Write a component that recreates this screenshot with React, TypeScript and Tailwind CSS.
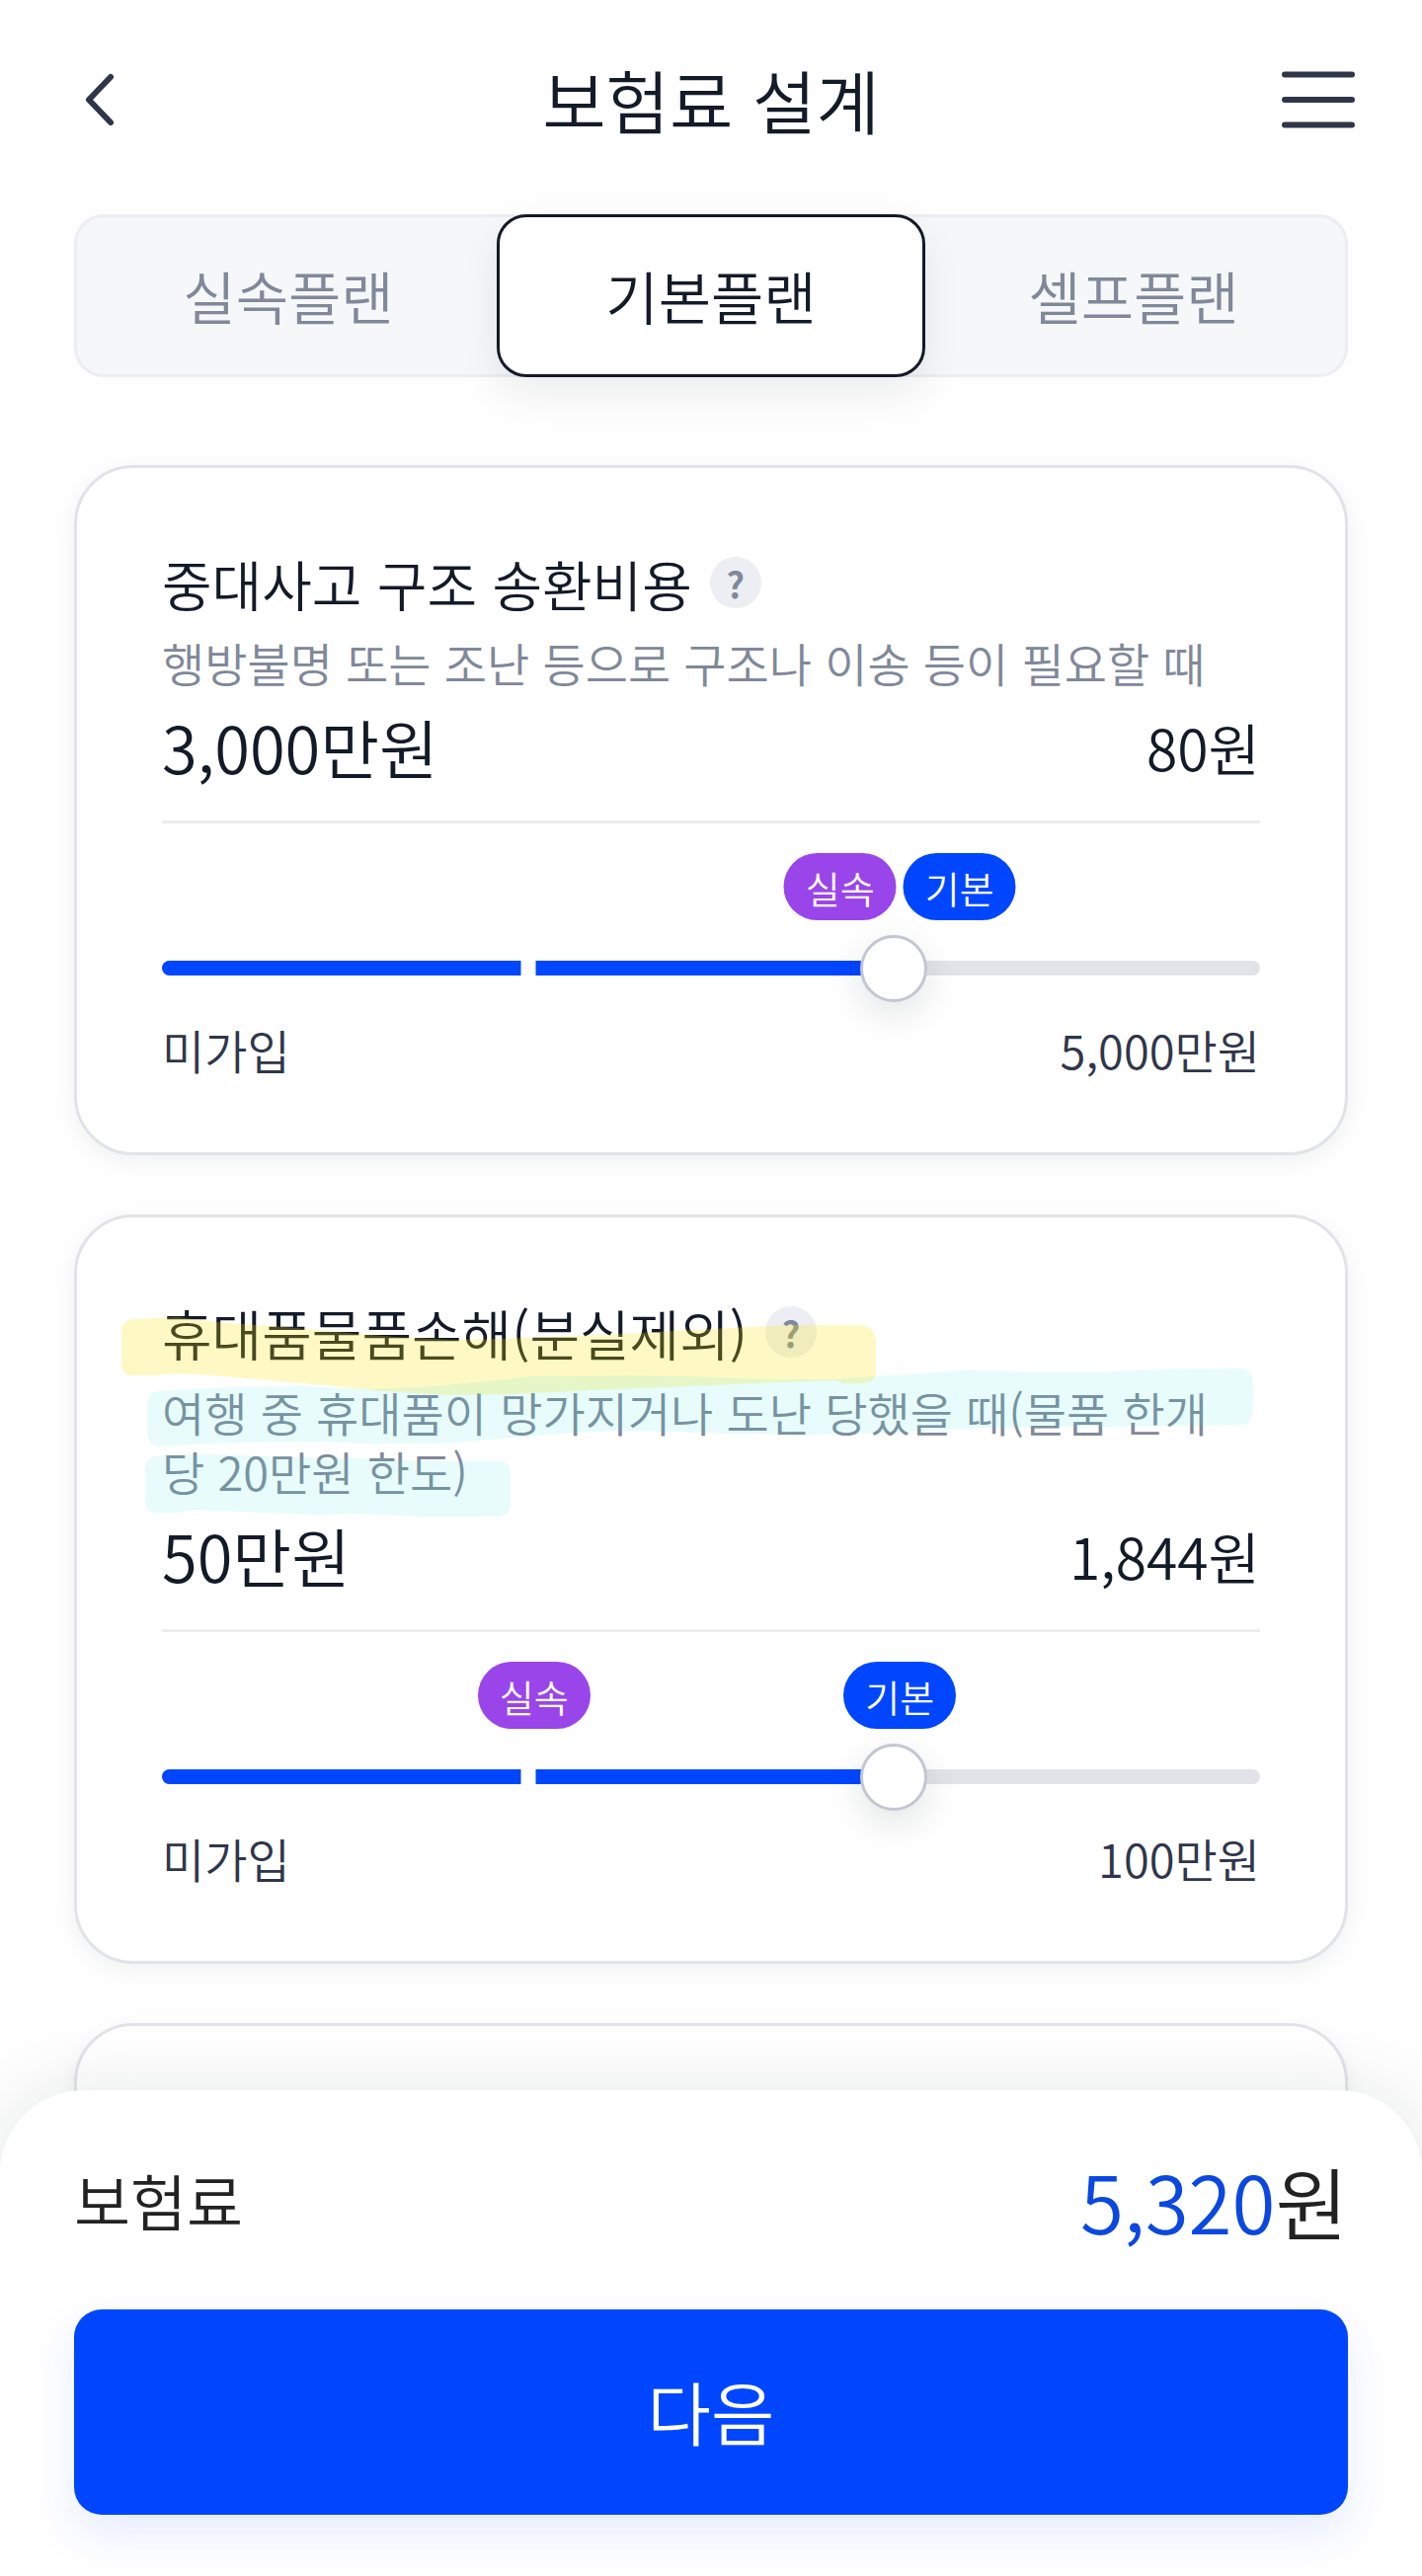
import { useState } from "react";
import clsx from "clsx";

const PLANS = ["실속플랜", "기본플랜", "셀프플랜"];

interface Badge {
  label: string;
  tone: "purple" | "blue";
}

interface Coverage {
  id: string;
  title: string;
  description: string;
  amount: string;
  price: string;
  max: string;
  // badges grouped by the slider step they sit on
  badges: { step: number; items: Badge[] }[];
  highlighted?: boolean;
}

const SAVER: Badge = { label: "실속", tone: "purple" };
const BASIC: Badge = { label: "기본", tone: "blue" };

const COVERAGES: Coverage[] = [
  {
    id: "rescue",
    title: "중대사고 구조 송환비용",
    description: "행방불명 또는 조난 등으로 구조나 이송 등이 필요할 때",
    amount: "3,000만원",
    price: "80원",
    max: "5,000만원",
    badges: [{ step: 2, items: [SAVER, BASIC] }],
  },
  {
    id: "belongings",
    title: "휴대품물품손해(분실제외)",
    description: "여행 중 휴대품이 망가지거나 도난 당했을 때(물품 한개당 20만원 한도)",
    amount: "50만원",
    price: "1,844원",
    max: "100만원",
    badges: [
      { step: 1, items: [SAVER] },
      { step: 2, items: [BASIC] },
    ],
    highlighted: true,
  },
];

const STEPS = 3;

const Header = () => (
  <header className="flex h-[217px] items-center justify-between px-[68px] pb-4">
    <button type="button" aria-label="뒤로" className="flex w-[74px] justify-start pl-4">
      <svg width="36" height="56" viewBox="0 0 36 56" fill="none" stroke="#30364a" strokeWidth="6" strokeLinecap="round" strokeLinejoin="round">
        <path d="M28 5 6 28l22 23" />
      </svg>
    </button>
    <h1 className="text-[70px] leading-[88px] text-[#131a28]">보험료 설계</h1>
    <button type="button" aria-label="메뉴" className="flex w-[74px] justify-end">
      <svg width="74" height="58" viewBox="0 0 74 58" fill="none" stroke="#30364a" strokeWidth="6" strokeLinecap="round">
        <path d="M3 3.5h68M3 29h68M3 54.5h68" />
      </svg>
    </button>
  </header>
);

const PlanTabs = () => {
  const [active, setActive] = useState(1);

  return (
    <nav className="mx-[75px] grid h-[165px] grid-cols-3 rounded-[30px] border-[3px] border-[#eceef2] bg-[#f5f7f9]">
      {PLANS.map((plan, i) => (
        <button
          key={plan}
          type="button"
          aria-pressed={i === active}
          onClick={() => setActive(i)}
          className={clsx(
            "-m-[3px] rounded-[30px] text-[58px]",
            i === active
              ? "border-[3px] border-[#131a28] bg-white text-[#131a28] shadow-[0_16px_40px_rgba(19,26,40,0.08)]"
              : "text-[#80889a]"
          )}
        >
          {plan}
        </button>
      ))}
    </nav>
  );
};

// Marker-pen strokes over the title and the description
const Highlights = () => (
  <svg
    aria-hidden="true"
    className="pointer-events-none absolute top-0 left-0 h-[320px] w-[1200px]"
    viewBox="78 1234 1200 320"
  >
    <path
      fill="rgb(250 232 10)"
      fillOpacity="0.24"
      d="M123 1350Q123 1337 138 1337L180 1335 220 1340 300 1346 340 1350 400 1355 460 1358 510 1357 610 1353 720 1347 800 1343 870 1343Q887 1344 887 1360V1390Q887 1402 872 1402H856Q850 1402 848 1399L760 1402 700 1405 600 1409 520 1413 450 1414 390 1410 340 1405 250 1397 215 1394 175 1392 155 1394H133Q123 1393 123 1382Z"
    />
    <path
      fill="rgb(60 230 218)"
      fillOpacity="0.12"
      d="M149 1425Q150 1411 160 1410L230 1406 300 1405 380 1408 440 1405 540 1395 640 1394 700 1395 780 1398 846 1398 900 1394 980 1389 1060 1391 1110 1391 1180 1388 1255 1387Q1269 1388 1269 1405V1425Q1269 1443 1257 1444L1130 1446 1000 1447 900 1452 820 1454 740 1453 640 1450 580 1452 500 1459 440 1463 380 1463 320 1461 280 1461 210 1463 160 1466Q149 1464 149 1448Z"
    />
    <path
      fill="rgb(60 230 218)"
      fillOpacity="0.12"
      d="M147 1490Q148 1477 160 1475L210 1474 300 1477 370 1478 430 1481H505Q517 1482 517 1492V1525Q517 1537 503 1537L430 1537 365 1534 320 1535 240 1532 195 1530 180 1533H155Q147 1531 147 1520Z"
    />
  </svg>
);

const CoverageCard = ({ item }: { item: Coverage }) => {
  const [step, setStep] = useState(2);

  return (
    <section className="relative rounded-[60px] border-[3px] border-[#e2e3e8] bg-white px-[86px] pt-[86px] pb-[74px] shadow-[0_6px_20px_rgba(19,26,40,0.06)]">
      <div className="flex h-[60px] items-center gap-[18px]">
        <h2 className="text-[55px] leading-[60px] text-[#131a28]">{item.title}</h2>
        <button
          type="button"
          aria-label={`${item.title} 설명`}
          className="flex size-[52px] items-center justify-center rounded-full bg-[#edeef3] text-[36px] leading-none font-bold text-[#80889a]"
        >
          ?
        </button>
      </div>
      <p className="mt-[21px] pr-10 text-[47px] leading-[60px] text-[#80889a]">{item.description}</p>
      <div className="mt-[17px] flex items-center justify-between leading-[76px] text-[#131a28]">
        <span className="text-[65px]">{item.amount}</span>
        <span className="text-[57px]">{item.price}</span>
      </div>

      <hr className="mt-[37px] border-t-[3px] border-[#ecedf1]" />

      <div className="relative mt-[30px] h-[68px]">
        {item.badges.map((group) => (
          <div
            key={group.step}
            className="absolute flex -translate-x-1/2 gap-[7px] pl-3"
            style={{ left: `${(group.step / STEPS) * 100}%` }}
          >
            {group.items.map((badge) => (
              <span
                key={badge.label}
                className={clsx(
                  "flex h-[68px] w-[114px] items-center justify-center rounded-full text-[38px] text-white",
                  badge.tone === "purple" ? "bg-[#9945ea]" : "bg-[#0046ff]"
                )}
              >
                {badge.label}
              </span>
            ))}
          </div>
        ))}
      </div>

      <div className="relative mt-[15px] flex h-[67px] items-center">
        <div className="relative h-[15px] w-full overflow-hidden rounded-full bg-[#e2e3e8]">
          <div className="h-full bg-[#0046ff]" style={{ width: `${(step / STEPS) * 100}%` }} />
          <div className="absolute inset-y-0 left-1/3 w-[15px] -translate-x-1/2 bg-white" />
        </div>
        <input
          type="range"
          aria-label={item.title}
          min={0}
          max={STEPS}
          value={step}
          onChange={(e) => setStep(Number(e.target.value))}
          className="absolute -left-[34px] h-[68px] w-[calc(100%+68px)] cursor-pointer appearance-none bg-transparent [&::-webkit-slider-thumb]:size-[68px] [&::-webkit-slider-thumb]:appearance-none [&::-webkit-slider-thumb]:rounded-full [&::-webkit-slider-thumb]:border-[3px] [&::-webkit-slider-thumb]:border-[#c3c6d2] [&::-webkit-slider-thumb]:bg-white [&::-webkit-slider-thumb]:shadow-[0_12px_36px_rgba(19,26,40,0.12)]"
        />
      </div>

      <div className="mt-[19px] flex justify-between text-[47px] leading-[60px] text-[#30364a]">
        <span>미가입</span>
        <span>{item.max}</span>
      </div>

      {item.highlighted && <Highlights />}
    </section>
  );
};

const PremiumBar = () => (
  <footer className="fixed inset-x-0 bottom-0 rounded-t-[84px] bg-white px-[75px] pt-[61px] pb-[62px] shadow-[0_0_72px_rgba(19,26,40,0.1)]">
    <div className="flex h-[100px] items-center justify-between text-[#222]">
      <span className="text-[62px]">보험료</span>
      <span className="text-[80px]">
        <span className="text-[#0b48e0]">5,320</span>원
      </span>
    </div>
    <button
      type="button"
      className="mt-[61px] h-[208px] w-full rounded-[28px] bg-[#0046ff] pb-1 text-[70px] text-white shadow-[0_20px_48px_rgba(0,70,255,0.1)]"
    >
      다음
    </button>
  </footer>
);

export default function App() {
  return (
    <div className="min-h-screen bg-[#fefefe] font-['Noto_Sans_CJK_KR',sans-serif] font-[350]" lang="ko">
      <Header />
      <PlanTabs />
      <main className="mt-[89px] flex flex-col gap-[60px] px-[75px]">
        {COVERAGES.map((item) => (
          <CoverageCard key={item.id} item={item} />
        ))}
        {/* next card, still under the premium bar */}
        <section className="h-[300px] rounded-[60px] border-[3px] border-[#e2e3e8] bg-white shadow-[0_6px_20px_rgba(19,26,40,0.06)]" />
      </main>
      <PremiumBar />
    </div>
  );
}
